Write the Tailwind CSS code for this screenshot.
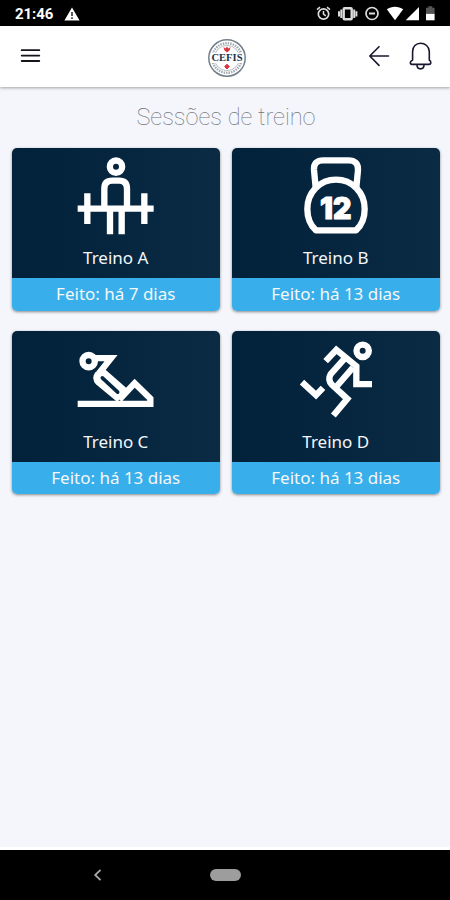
<!DOCTYPE html>
<html lang="pt-BR">
<head>
  <meta charset="UTF-8" />
  <meta name="viewport" content="width=device-width, initial-scale=1.0" />
  <title>Sessões de treino</title>
  <script src="https://cdn.jsdelivr.net/npm/@tailwindcss/browser@4"></script>
</head>
<body class="bg-[#f4f6fb] font-['Noto_Sans',sans-serif]">
  <div class="w-[450px] h-[900px] flex flex-col overflow-hidden">

    <!-- Status bar -->
    <div class="h-[25.5px] shrink-0 bg-black flex items-center pl-[15px] text-white">
      <span class="w-[49px] pt-[3px] text-[15px] leading-none font-bold tracking-[-0.1px] font-['Roboto',sans-serif]">21:46</span>
      <svg class="w-4 h-[14px] mt-[2px]" viewBox="0 0 16 14">
        <path d="M8 0.5L15.6 13.5H0.4Z" fill="#fff" />
        <path d="M8 5v4M8 10.3v1.7" stroke="#333" stroke-width="1.6" />
      </svg>
      <svg class="w-[126px] h-[18px] ml-auto mr-[10px] mt-[2px]" viewBox="314 5 126 18" fill="none" stroke="#ddd" stroke-width="1.7">
        <circle cx="323.5" cy="14" r="5.2" />
        <path d="M317 9.6l3-2.5M330 9.6l-3-2.5M323.5 11v3.2l2.3 1.6" stroke-width="1.5" />
        <rect x="343.7" y="8.2" width="8" height="11" rx="0.8" stroke-width="2.4" />
        <path d="M341.3 9.5v8.6M354.2 9.5v8.6" stroke-width="2" />
        <path d="M339 11.2v5.2M356.4 11.2v5.2" stroke-width="2" />
        <circle cx="372" cy="13.5" r="6" />
        <path d="M369 13.5h6" stroke-width="2" />
        <path d="M386.8 9.2C391.5 5.8 398.5 5.8 403.2 9.2L395 20.3Z" fill="#fff" stroke="none" />
        <path d="M419 7v13.3h-13.3Z" fill="#fff" stroke="none" />
        <path d="M428.3 6.3h4v1.5h2.3v6h-8.6v-6h2.3Z" fill="#555" stroke="none" />
        <path d="M426 13.8h8.6v6.5H426Z" fill="#fff" stroke="none" />
      </svg>
    </div>

    <!-- Header -->
    <header class="relative h-[61px] shrink-0 bg-white flex items-center justify-between pl-[20px] pr-[17px] shadow-[0_1px_3px_rgba(0,0,0,0.35)]">
      <svg class="w-[21px] h-4" viewBox="0 0 21 16" stroke="#15151c" stroke-width="1.8" stroke-linecap="round">
        <path d="M1.7 2.2h17.6M1.7 7.6h17.6M1.7 13h17.6" />
      </svg>
      <svg class="w-10 h-10 ml-[45px] mt-[3px]" viewBox="0 0 40 40">
        <circle cx="20" cy="20" r="18.2" fill="#fff" stroke="#74808b" stroke-width="1.5" />
        <circle cx="20" cy="20" r="14.8" fill="none" stroke="#a3abb3" stroke-width="2.4" stroke-dasharray="1.5 1" />
        <circle cx="20" cy="20" r="12.6" fill="#fff" stroke="#9aa4ad" stroke-width="0.7" />
        <path d="M4 15h32v10H4Z" fill="#fff" />
        <path d="M16.4 9l2.2 1.6L20 8.6l1.4 2 2.2-1.6-1 3.2L20 14.6l-2.6-2.4Z" fill="#d8343c" />
        <text x="20" y="23" text-anchor="middle" textLength="31" lengthAdjust="spacingAndGlyphs" font-size="9.5" font-weight="700" fill="#1f3448" class="font-['Liberation_Serif',serif]">CEFIS</text>
        <path d="M20 26.2l2.3 2.4-2.3 2.4-2.3-2.4Z" fill="#d8343c" stroke="#d8343c" />
      </svg>
      <svg class="w-[66px] h-[30px]" viewBox="367 41 66 30" fill="none" stroke="#17172f" stroke-width="1.6" stroke-linecap="round" stroke-linejoin="round">
        <path d="M388.5 56H370M379 46.7L369.8 56l9.2 9.4" />
        <path d="M412.6 60V51.5C412.6 46.5 416 43.2 420.5 43.2S429.3 46.5 429.3 51.5V60C430.6 60.8 431 61.8 430.8 63C430.6 64.2 429.8 64.4 429 64.4H412C411.2 64.4 410.5 64.2 410.3 63C410.2 61.8 411 60.8 412.6 60Z" />
        <path d="M417 64.8C417 67.4 418.3 68.9 420.5 68.9S424 67.4 424 64.8" />
      </svg>
    </header>

    <!-- Training sessions -->
    <main class="flex-1 border-b-[3px] border-white">
      <h1 class="h-[61px] pt-[15px] pl-[2px] text-center text-[23.5px] leading-[30px] font-thin text-[#6f7276] font-['Roboto',sans-serif]">Sessões de treino</h1>

      <div class="grid grid-cols-[208.5px_208.5px] gap-x-[11.5px] gap-y-[20.5px] pl-[11.5px] text-center text-[#f5f6f8]">
        <article class="h-[163px] flex flex-col rounded-[5px] overflow-hidden shadow-[0_1px_3px_rgba(0,0,0,0.45)]">
          <div class="h-[130.5px] pt-[8.5px] bg-linear-to-r from-[#02213a] to-[#0b2b45]">
            <svg class="w-[78px] h-[80px] mx-auto" viewBox="216 48 234 240" fill="none" stroke="#fff" stroke-width="19">
              <circle cx="333" cy="80" r="18.5" />
              <path d="M218 206H446M247 160V252M418 160V252" />
              <path d="M298 206V146Q298 122 322 122H342Q366 122 366 146V206M315 206V283M350 206V283" />
            </svg>
            <p class="mt-[10px] text-[17px] leading-6">Treino A</p>
          </div>
          <p class="h-[32.5px] bg-[#38afea] text-[17px] leading-[32px]">Feito: há 7 dias</p>
        </article>

        <article class="h-[163px] flex flex-col rounded-[5px] overflow-hidden shadow-[0_1px_3px_rgba(0,0,0,0.45)]">
          <div class="h-[130.5px] pt-[8.5px] bg-linear-to-r from-[#02213a] to-[#0b2b45]">
            <svg class="w-[78px] h-[80px] mx-auto" viewBox="207 48 234 240" fill="none" stroke="#fff" stroke-width="19">
              <path d="M263 142L258 90Q256 61 286 61H361Q391 61 390 90L385 142" />
              <path d="M264 271C247 256 238 232 238 207C238 157 276 119 324 119S410 157 410 207C410 232 401 256 384 271Z" stroke-linejoin="round" />
              <text x="323" y="237" text-anchor="middle" textLength="94" lengthAdjust="spacingAndGlyphs" font-size="88" font-weight="900" fill="#fff" stroke="#fff" stroke-width="3" class="font-['Inter',sans-serif]">12</text>
            </svg>
            <p class="mt-[10px] text-[17px] leading-6">Treino B</p>
          </div>
          <p class="h-[32.5px] bg-[#38afea] text-[17px] leading-[32px]">Feito: há 13 dias</p>
        </article>

        <article class="h-[163px] flex flex-col rounded-[5px] overflow-hidden shadow-[0_1px_3px_rgba(0,0,0,0.45)]">
          <div class="h-[130.5px] pt-[8.5px] bg-linear-to-r from-[#02213a] to-[#0b2b45]">
            <svg class="w-[78px] h-[80px] mx-auto" viewBox="216 43.5 234 240" fill="none" stroke="#fff" stroke-width="19">
              <circle cx="251" cy="107" r="18.5" />
              <path d="M270 98H318L282 143" />
              <path d="M290 140L278 147Q269 158 281 171L336 216L356 193L298 142Z" fill="#fff" />
              <path d="M292 157L338 200" stroke="#06253e" stroke-width="11" stroke-linecap="round" />
              <path d="M218 235H436V219L389 173L343 222" />
            </svg>
            <p class="mt-[10px] text-[17px] leading-6">Treino C</p>
          </div>
          <p class="h-[32.5px] bg-[#38afea] text-[17px] leading-[32px]">Feito: há 13 dias</p>
        </article>

        <article class="h-[163px] flex flex-col rounded-[5px] overflow-hidden shadow-[0_1px_3px_rgba(0,0,0,0.45)]">
          <div class="h-[130.5px] pt-[8.5px] bg-linear-to-r from-[#02213a] to-[#0b2b45]">
            <svg class="w-[78px] h-[80px] mx-auto" viewBox="207 43.5 234 240" fill="none" stroke="#fff" stroke-width="19">
              <circle cx="404" cy="76" r="18.5" />
              <path d="M293 107L325 73L385 122V176H432" />
              <path d="M351 98L308 146Q298 163 312 178L358 220L316 270M375 126L323 186" />
              <path d="M222 170L264 209L285 187" />
            </svg>
            <p class="mt-[10px] text-[17px] leading-6">Treino D</p>
          </div>
          <p class="h-[32.5px] bg-[#38afea] text-[17px] leading-[32px]">Feito: há 13 dias</p>
        </article>
      </div>
    </main>

    <!-- Navigation bar -->
    <nav class="h-[50.5px] shrink-0 bg-black flex items-center pl-[93px]">
      <svg class="w-[9px] h-[14px]" viewBox="0 0 9 14" fill="none" stroke="#aaa" stroke-width="1.8">
        <path d="M7.5 1.8L2.2 7l5.3 5.2" />
      </svg>
      <span class="w-[31px] h-3 ml-[108px] rounded-full bg-[#9d9d9d]"></span>
    </nav>
  </div>
</body>
</html>
